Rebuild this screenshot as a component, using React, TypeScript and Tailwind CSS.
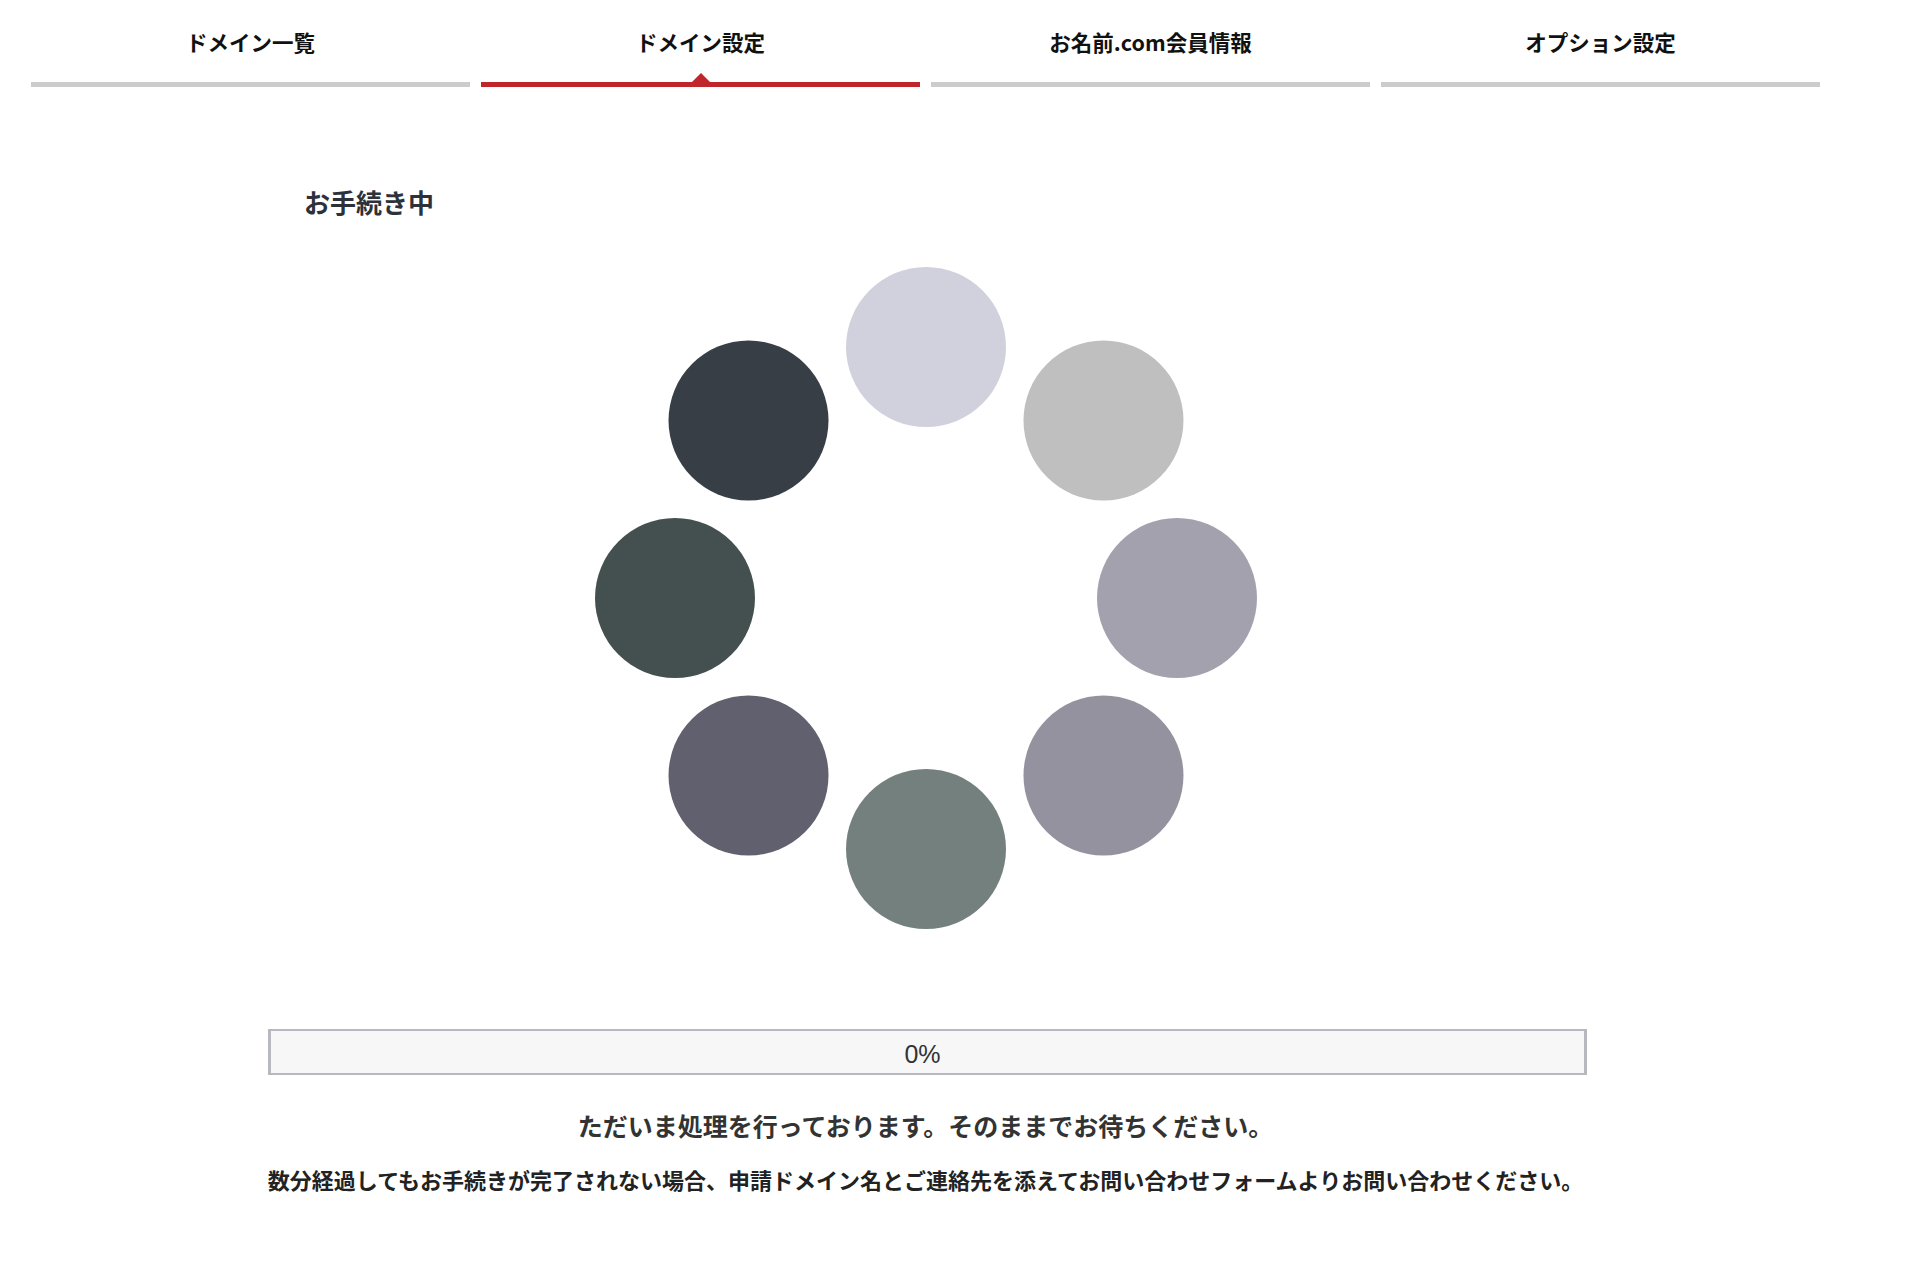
import React from 'react';

const tabs = ['ドメイン一覧', 'ドメイン設定', 'お名前.com会員情報', 'オプション設定'];
const activeTab = 1;

// spinner dots, clockwise from the top
const dots = ['#d1d1de', '#bfbfbf', '#a2a1ad', '#93929e', '#73807e', '#61606e', '#44504f', '#373e46'];

function Spinner() {
  const c = 331;
  const r = 251;
  return (
    <svg width="662" height="662" viewBox="0 0 662 662" className="block mx-auto">
      {dots.map((color, i) => {
        const a = (i * Math.PI) / 4;
        return <circle key={i} cx={c + r * Math.sin(a)} cy={c - r * Math.cos(a)} r="80" fill={color} />;
      })}
    </svg>
  );
}

export default function App() {
  return (
    <div className="min-h-screen bg-white font-['Noto_Sans_CJK_JP',sans-serif]">
      <div className="ml-[31px] w-[1789px] pb-20">
        <nav className="flex gap-[11px]">
          {tabs.map((label, i) => (
            <div key={label} className="flex-1 flex flex-col">
              <div className="pt-[27px] pb-[25px] text-center text-[21.5px] leading-[30px] font-bold text-[#111]">
                {label}
              </div>
              <div className={`relative h-[5px] ${i === activeTab ? 'bg-[#c0252b]' : 'bg-[#cccccc]'}`}>
                {i === activeTab && (
                  <span className="absolute left-1/2 -translate-x-1/2 -top-[9px] w-0 h-0 border-x-[9px] border-x-transparent border-b-[9px] border-b-[#c0252b]" />
                )}
              </div>
            </div>
          ))}
        </nav>

        <h2 className="mt-[97px] ml-[273px] text-[26px] leading-[36px] font-bold text-[#2d3139]">お手続き中</h2>

        <div className="mt-[47px]">
          <Spinner />
        </div>

        <div className="mt-[100px] ml-[237px] w-[1319px] h-[46px] border-y-2 border-x-[3px] border-[#b8b8bf] bg-[#f7f7f7] flex items-center justify-center">
          <span className="pt-[6px] pr-[10px] font-['Liberation_Sans',sans-serif] text-[25px] text-[#333]">0%</span>
        </div>

        <p className="mt-[33px] text-center text-[25px] leading-[34px] font-bold text-[#333]">
          ただいま処理を行っております。そのままでお待ちください。
        </p>
        <p className="mt-[22px] text-center text-[22px] leading-[30px] font-semibold text-[#222]">
          数分経過してもお手続きが完了されない場合、申請ドメイン名とご連絡先を添えてお問い合わせフォームよりお問い合わせください。
        </p>
      </div>
    </div>
  );
}
